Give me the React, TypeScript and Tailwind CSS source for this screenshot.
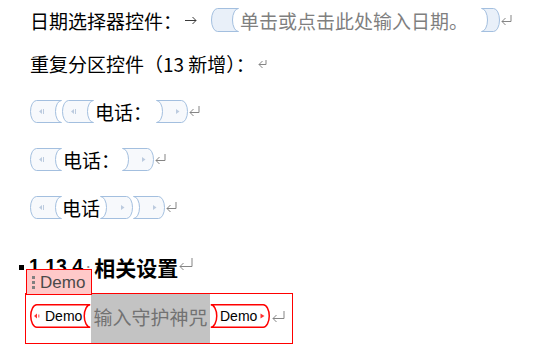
import React from 'react'

const CJK = "font-['Noto_Sans_CJK_SC',sans-serif]"
const LATIN = "font-['Liberation_Sans',sans-serif]"

// paragraph mark
function Ret({ w = 11, h = 9, className = '' }: { w?: number; h?: number; className?: string }) {
  const y = h - 3
  return (
    <svg width={w} height={h + 1} className={className} fill="none" stroke="#858585" strokeWidth={1}>
      <path d={`M ${w - 1} 0 V ${y + 0.5} H 1`} />
      <path d={`M 4.5 ${y - 3} L 1 ${y + 0.5} L 4.5 ${y + 4}`} />
    </svg>
  )
}

// tab mark
function TabArrow({ className = '' }: { className?: string }) {
  return (
    <svg width={12} height={9} className={className} fill="none" stroke="#3a3a3a" strokeWidth={1}>
      <path d="M 0 4.5 H 11" />
      <path d="M 7.5 1 L 11 4.5 L 7.5 8" />
    </svg>
  )
}

// both edges are half-ellipses: "( (" for start, ") )" for end
function tabPath(kind: 'open' | 'close', w: number, h: number, b: number, sw: number) {
  const t = sw / 2
  const bt = h - t
  const ry = (h - sw) / 2
  if (kind === 'open') {
    return `M ${b + t} ${t} L ${w - t} ${t} A ${b} ${ry} 0 0 0 ${w - t} ${bt} L ${b + t} ${bt} A ${b} ${ry} 0 0 1 ${b + t} ${t} Z`
  }
  return `M ${t} ${t} L ${w - b - t} ${t} A ${b} ${ry} 0 0 1 ${w - b - t} ${bt} L ${t} ${bt} A ${b} ${ry} 0 0 0 ${t} ${t} Z`
}

// content control start/end tab
function Tab({
  kind,
  w,
  h,
  fill = '#f7f9fc',
  stroke = '#a3bfdf',
  icon = true,
  className = '',
}: {
  kind: 'open' | 'close'
  w: number
  h: number
  fill?: string
  stroke?: string
  icon?: boolean
  className?: string
}) {
  const cy = h / 2
  return (
    <svg width={w} height={h} className={`shrink-0 ${className}`}>
      <path d={tabPath(kind, w, h, 6, 1)} fill={fill} stroke={stroke} strokeWidth={1} />
      {icon && kind === 'open' && (
        <g fill="#bccbdf">
          <path d={`M 9 ${cy} L 12 ${cy - 2.5} L 12 ${cy + 2.5} Z`} />
          <rect x={13} y={cy - 2.5} width={1} height={5} />
        </g>
      )}
      {icon && kind === 'close' && (
        <g fill="#bccbdf">
          <path d={`M ${w - 12} ${cy - 2.5} L ${w - 8.5} ${cy} L ${w - 12} ${cy + 2.5} Z`} />
        </g>
      )}
    </svg>
  )
}

function Pill({ kind, w, children }: { kind: 'open' | 'close'; w: number; children: React.ReactNode }) {
  return (
    <span className="relative flex items-center shrink-0 h-[24px]" style={{ width: w }}>
      <svg width={w} height={24} className="absolute inset-0">
        <path d={tabPath(kind, w, 24, 6, 1.5)} fill="#ffffff" stroke="#ff0000" strokeWidth={1.5} />
      </svg>
      <span className="relative flex items-center w-full h-full">{children}</span>
    </span>
  )
}

export default function App() {
  return (
    <div className={`w-[557px] h-[355px] bg-white overflow-hidden text-black ${CJK}`}>
      <div className="pl-[30px] text-[19px] leading-none">
        <div className="flex items-center h-[40px]">
          <span>日期选择器控件：</span>
          <TabArrow className="ml-[3px]" />
          <Tab kind="open" w={28} h={24} fill="#e9f0f9" icon={false} className="ml-[14px]" />
          <span className="ml-[1px] text-[#7f7f7f]">单击或点击此处输入日期。</span>
          <Tab kind="close" w={19} h={24} fill="#e9f0f9" icon={false} className="ml-[13px]" />
          <Ret className="ml-[1px]" />
        </div>

        <div className="flex items-center h-[47px]">
          <span>重复分区控件（13 新增）：</span>
          <Ret w={9} h={7} className="ml-[3px]" />
        </div>

        <div className="flex items-center h-[48px]">
          <Tab kind="open" w={32} h={23} />
          <Tab kind="open" w={32} h={23} />
          <span className="ml-[1px]">电话：</span>
          <Tab kind="close" w={32} h={23} className="ml-[4px]" />
          <Ret className="ml-[1px]" />
        </div>

        <div className="flex items-center h-[48px]">
          <Tab kind="open" w={32} h={23} />
          <span className="ml-[1px]">电话：</span>
          <Tab kind="close" w={32} h={23} className="ml-[2px]" />
          <Ret className="ml-[1px]" />
        </div>

        <div className="flex items-center h-[48px]">
          <Tab kind="open" w={32} h={23} />
          <span>电话</span>
          <Tab kind="close" w={33} h={23} />
          <Tab kind="close" w={32} h={23} />
          <Ret className="ml-[1px]" />
        </div>
      </div>

      {/* heading */}
      <div className="flex items-center h-[36px] mt-[18px] pl-[19px] text-[21px] font-bold leading-none">
        <span className="w-[5px] h-[5px] bg-black shrink-0" />
        <span className={`ml-[5px] text-[19.5px] ${LATIN}`}>1.13.4</span>
        <span className="w-[11px] text-center text-[#8a8a8a] font-normal text-[10px] tracking-[-1px]">··</span>
        <span>相关设置</span>
        <Ret w={14} h={11} className="ml-[1px] -mt-[6px]" />
      </div>

      {/* content control with title tag */}
      <div className="relative ml-[25px] mt-[8px] w-[268px] h-[51px] border border-[#ff0000] flex">
        <div className="absolute left-0 -top-[25px] w-[66px] h-[26px] bg-[#ffc9c9] border border-[#ff0000] flex items-center">
          <div className="flex flex-col gap-[2px] ml-[5px]">
            <span className="w-[3px] h-[3px] bg-[#808080]" />
            <span className="w-[3px] h-[3px] bg-[#808080]" />
            <span className="w-[3px] h-[3px] bg-[#808080]" />
          </div>
          <span className={`ml-[5px] text-[17px] leading-none text-[#4a4a4a] ${LATIN}`}>Demo</span>
        </div>

        <div className="ml-[4px] self-start mt-[10px]">
          <Pill kind="open" w={61}>
            <svg width={6} height={6} className="ml-[4px]">
              <path d="M 0 3 L 3 0.5 L 3 5.5 Z" fill="#ff3030" />
              <rect x={4} y={1.5} width={1.5} height={3} fill="#ff8080" />
            </svg>
            <span className={`ml-[5px] text-[14px] leading-none ${LATIN}`}>Demo</span>
          </Pill>
        </div>

        <div className="w-[119px] bg-[#c3c3c3] pt-[10px]">
          <div className="h-[24px] flex items-center justify-center text-[19px] leading-none text-[#727272]">
            输入守护神咒
          </div>
        </div>

        <div className="self-start mt-[10px] flex items-center">
          <Pill kind="close" w={60}>
            <span className={`ml-[10px] text-[14px] leading-none ${LATIN}`}>Demo</span>
            <svg width={6} height={6} className="ml-[3px]">
              <path d="M 0.5 0.5 L 4.5 3 L 0.5 5.5 Z" fill="#ff3030" />
            </svg>
          </Pill>
          <Ret w={13} h={10} className="ml-[2px]" />
        </div>
      </div>
    </div>
  )
}
